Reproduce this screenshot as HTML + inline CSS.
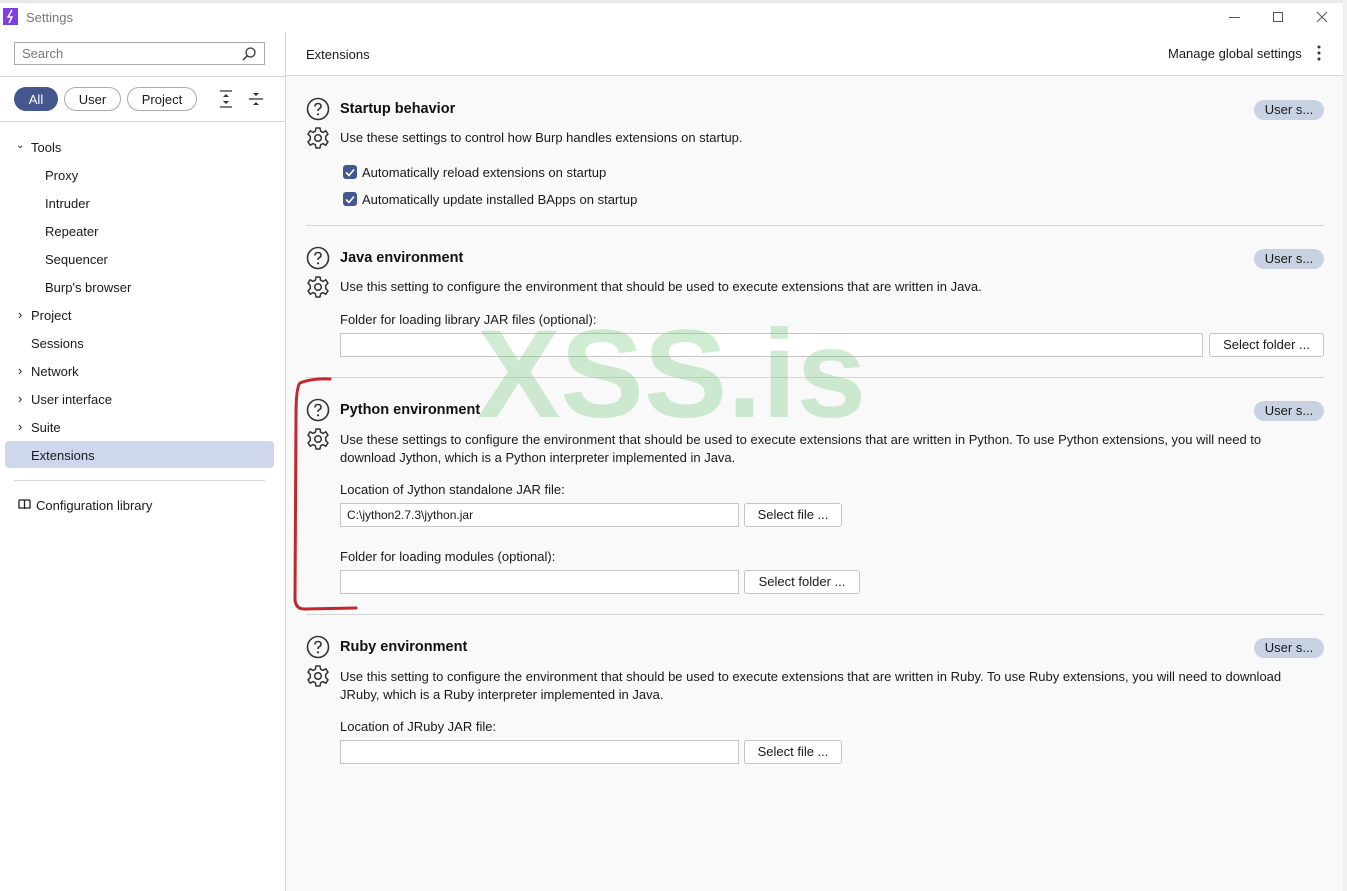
<!DOCTYPE html>
<html><head><meta charset="utf-8"><style>
*{box-sizing:border-box;margin:0;padding:0}
body{width:1347px;height:891px;overflow:hidden;background:#fff;font-family:"Liberation Sans",sans-serif;font-size:13px;color:#1a1a1a;position:relative}
.a{position:absolute;white-space:nowrap}
.t{font-size:14.5px;font-weight:bold;color:#111}
.btn{position:absolute;border:1px solid #c4c4c4;border-radius:3px;background:#fff;height:24px;line-height:22px;text-align:center;font-size:13px}
.inp{position:absolute;border:1px solid #c4c4c4;background:#fff;height:24px;line-height:22px;padding-left:6px;font-size:12px}
.us{position:absolute;left:1254px;width:70px;height:20px;border-radius:10px;background:#c8d2e2;text-align:center;line-height:20px;font-size:13px}
.sep{position:absolute;left:306px;width:1018px;height:1px;background:#d6d6d6}
.nav{position:absolute;font-size:13px}
.cb{position:absolute;left:343px;width:14px;height:14px;border-radius:3px;background:#44578e}
.d{margin-top:1px}
</style></head><body>
<div class="a" style="left:0;top:0;width:1347px;height:3px;background:#e8e8e8"></div>
<div class="a" style="left:3px;top:8px;width:15px;height:17px;background:#7b3fe4"></div>
<svg class="a" style="left:5px;top:9px" width="11" height="15"><path d="M7 1 L3 8 L7 8 L4 14" stroke="#fff" stroke-width="1.5" fill="none"/></svg>
<div class="a" style="left:26px;top:10px;color:#777;font-size:13px">Settings</div>
<div class="a" style="left:1229px;top:17px;width:11px;height:1px;background:#555"></div>
<div class="a" style="left:1273px;top:12px;width:10px;height:10px;border:1px solid #555"></div>
<svg class="a" style="left:1316px;top:11px" width="12" height="12"><path d="M1 1L11 11M11 1L1 11" stroke="#555"/></svg>
<div class="a" style="left:1343px;top:0;width:4px;height:891px;background:#f0f0f0"></div>
<div class="a" style="left:285px;top:32px;width:1px;height:859px;background:#d6d6d6"></div>
<div class="a" style="left:14px;top:42px;width:251px;height:23px;border:1px solid #aaa;padding-left:7px;line-height:22px;color:#777">Search</div>
<svg class="a" style="left:241px;top:46px" width="16" height="16"><circle cx="9.5" cy="6.5" r="4.5" stroke="#333" fill="none" stroke-width="1.3"/><path d="M6.3 9.7L2 14" stroke="#333" stroke-width="1.4"/></svg>
<div class="a" style="left:0;top:76px;width:285px;height:1px;background:#d6d6d6"></div>
<div class="a" style="left:14px;top:87px;width:44px;height:24px;border-radius:12px;background:#44578e;color:#fff;text-align:center;line-height:25px">All</div>
<div class="a" style="left:64px;top:87px;width:57px;height:24px;border-radius:12px;border:1px solid #aaa;text-align:center;line-height:23px">User</div>
<div class="a" style="left:127px;top:87px;width:70px;height:24px;border-radius:12px;border:1px solid #aaa;text-align:center;line-height:23px">Project</div>
<svg class="a" style="left:218px;top:90px" width="16" height="18"><path d="M2 1H14M2 17H14" stroke="#333" stroke-width="1.3"/><path d="M8 4L5 7H11Z M8 14L5 11H11Z" fill="#333"/></svg>
<svg class="a" style="left:248px;top:90px" width="16" height="18"><path d="M1 9H15" stroke="#333" stroke-width="1.3"/><path d="M8 6L5 3H11Z M8 12L5 15H11Z" fill="#333"/></svg>
<div class="a" style="left:0;top:121px;width:285px;height:1px;background:#d6d6d6"></div>
<div class="nav" style="left:16px;top:140px;font-size:10px">⌄</div>
<div class="nav" style="left:31px;top:140px">Tools</div>
<div class="nav" style="left:45px;top:168px">Proxy</div>
<div class="nav" style="left:45px;top:196px">Intruder</div>
<div class="nav" style="left:45px;top:224px">Repeater</div>
<div class="nav" style="left:45px;top:252px">Sequencer</div>
<div class="nav" style="left:45px;top:280px">Burp's browser</div>
<div class="nav" style="left:18px;top:307px">›</div><div class="nav" style="left:31px;top:308px">Project</div>
<div class="nav" style="left:31px;top:336px">Sessions</div>
<div class="nav" style="left:18px;top:363px">›</div><div class="nav" style="left:31px;top:364px">Network</div>
<div class="nav" style="left:18px;top:391px">›</div><div class="nav" style="left:31px;top:392px">User interface</div>
<div class="nav" style="left:18px;top:419px">›</div><div class="nav" style="left:31px;top:420px">Suite</div>
<div class="a" style="left:5px;top:441px;width:269px;height:27px;border-radius:4px;background:#cfd7ee"></div>
<div class="nav" style="left:31px;top:448px">Extensions</div>
<div class="a" style="left:14px;top:480px;width:251px;height:1px;background:#d6d6d6"></div>
<svg class="a" style="left:18px;top:499px" width="13" height="11"><path d="M1 1H5.5Q6.5 1 6.5 2V10M12 1H7.5Q6.5 1 6.5 2M1 1V9H6.5M12 1V9H6.5" stroke="#222" fill="none" stroke-width="1.3"/></svg>
<div class="nav" style="left:36px;top:498px">Configuration library</div>
<div class="a" style="left:286px;top:32px;width:1057px;height:859px;background:#f9f9f9"></div>
<div class="a" style="left:286px;top:32px;width:1057px;height:44px;background:#fff;border-bottom:1px solid #d6d6d6"></div>
<div class="a" style="left:306px;top:47px">Extensions</div>
<div class="a" style="left:1168px;top:46px">Manage global settings</div>
<svg class="a" style="left:1316px;top:45px" width="6" height="16"><circle cx="3" cy="2" r="1.5" fill="#333"/><circle cx="3" cy="8" r="1.5" fill="#333"/><circle cx="3" cy="14" r="1.5" fill="#333"/></svg>
<svg width="0" height="0" style="position:absolute"><defs>
<symbol id="q" viewBox="0 0 24 24"><circle cx="12" cy="12" r="10.5" stroke="#333" stroke-width="1.6" fill="none"/><path d="M9 9.5Q9 6.5 12 6.5Q15 6.5 15 9.3Q15 11 12.8 12Q12 12.5 12 14" stroke="#333" stroke-width="1.6" fill="none"/><circle cx="12" cy="17.3" r="1.1" fill="#333"/></symbol>
<symbol id="g" viewBox="0 0 24 24"><path d="M10 2H14L14.6 5.2L17 6.4L19.8 4.8L22 8.2L19.7 10.4V13.6L22 15.8L19.8 19.2L17 17.6L14.6 18.8L14 22H10L9.4 18.8L7 17.6L4.2 19.2L2 15.8L4.3 13.6V10.4L2 8.2L4.2 4.8L7 6.4L9.4 5.2Z" stroke="#333" stroke-width="1.5" fill="none" stroke-linejoin="round"/><circle cx="12" cy="12" r="3.3" stroke="#333" stroke-width="1.5" fill="none"/></symbol>
</defs></svg>
<svg class="a" style="left:306px;top:97px" width="24" height="24"><use href="#q"/></svg>
<svg class="a" style="left:306px;top:126px" width="24" height="24"><use href="#g"/></svg>
<div class="a t" style="left:340px;top:101px">Startup behavior</div>
<div class="us" style="top:100px">User s...</div>
<div class="a" style="left:340px;top:130px">Use these settings to control how Burp handles extensions on startup.</div>
<div class="cb" style="top:165px"></div><svg class="a" style="left:345px;top:168px" width="10" height="9"><path d="M1 4.5L4 7.5L9 1.5" stroke="#fff" stroke-width="1.6" fill="none"/></svg>
<div class="a" style="left:362px;top:165px">Automatically reload extensions on startup</div>
<div class="cb" style="top:192px"></div><svg class="a" style="left:345px;top:195px" width="10" height="9"><path d="M1 4.5L4 7.5L9 1.5" stroke="#fff" stroke-width="1.6" fill="none"/></svg>
<div class="a" style="left:362px;top:192px">Automatically update installed BApps on startup</div>
<div class="sep" style="top:225px"></div>
<svg class="a" style="left:306px;top:246px" width="24" height="24"><use href="#q"/></svg>
<svg class="a" style="left:306px;top:275px" width="24" height="24"><use href="#g"/></svg>
<div class="a t" style="left:340px;top:250px">Java environment</div>
<div class="us" style="top:249px">User s...</div>
<div class="a" style="left:340px;top:279px">Use this setting to configure the environment that should be used to execute extensions that are written in Java.</div>
<div class="a" style="left:340px;top:312px">Folder for loading library JAR files (optional):</div>
<div class="inp" style="left:340px;top:333px;width:863px"></div>
<div class="btn" style="left:1209px;top:333px;width:115px">Select folder ...</div>
<div class="sep" style="top:377px"></div>
<div class="a" style="left:477px;top:303px;font-size:125px;font-weight:bold;color:rgba(120,200,130,.35)">XSS.is</div>
<svg class="a" style="left:306px;top:398px" width="24" height="24"><use href="#q"/></svg>
<svg class="a" style="left:306px;top:427px" width="24" height="24"><use href="#g"/></svg>
<div class="a t" style="left:340px;top:402px">Python environment</div>
<div class="us" style="top:401px">User s...</div>
<div class="a" style="left:340px;top:431px;line-height:18px">Use these settings to configure the environment that should be used to execute extensions that are written in Python. To use Python extensions, you will need to<br>download Jython, which is a Python interpreter implemented in Java.</div>
<div class="a" style="left:340px;top:482px">Location of Jython standalone JAR file:</div>
<div class="inp" style="left:340px;top:503px;width:399px">C:\jython2.7.3\jython.jar</div>
<div class="btn" style="left:744px;top:503px;width:98px">Select file ...</div>
<div class="a" style="left:340px;top:549px">Folder for loading modules (optional):</div>
<div class="inp" style="left:340px;top:570px;width:399px"></div>
<div class="btn" style="left:744px;top:570px;width:116px">Select folder ...</div>
<div class="sep" style="top:614px"></div>
<svg class="a" style="left:290px;top:375px" width="70" height="240"><path d="M40 4Q22 3 10 8Q6 12 6 40L5 225Q6 234 14 234L66 233" stroke="#c0282d" stroke-width="3" fill="none" stroke-linecap="round"/></svg>
<svg class="a" style="left:306px;top:635px" width="24" height="24"><use href="#q"/></svg>
<svg class="a" style="left:306px;top:664px" width="24" height="24"><use href="#g"/></svg>
<div class="a t" style="left:340px;top:639px">Ruby environment</div>
<div class="us" style="top:638px">User s...</div>
<div class="a" style="left:340px;top:668px;line-height:18px">Use this setting to configure the environment that should be used to execute extensions that are written in Ruby. To use Ruby extensions, you will need to download<br>JRuby, which is a Ruby interpreter implemented in Java.</div>
<div class="a" style="left:340px;top:719px">Location of JRuby JAR file:</div>
<div class="inp" style="left:340px;top:740px;width:399px"></div>
<div class="btn" style="left:744px;top:740px;width:98px">Select file ...</div>
</body></html>
